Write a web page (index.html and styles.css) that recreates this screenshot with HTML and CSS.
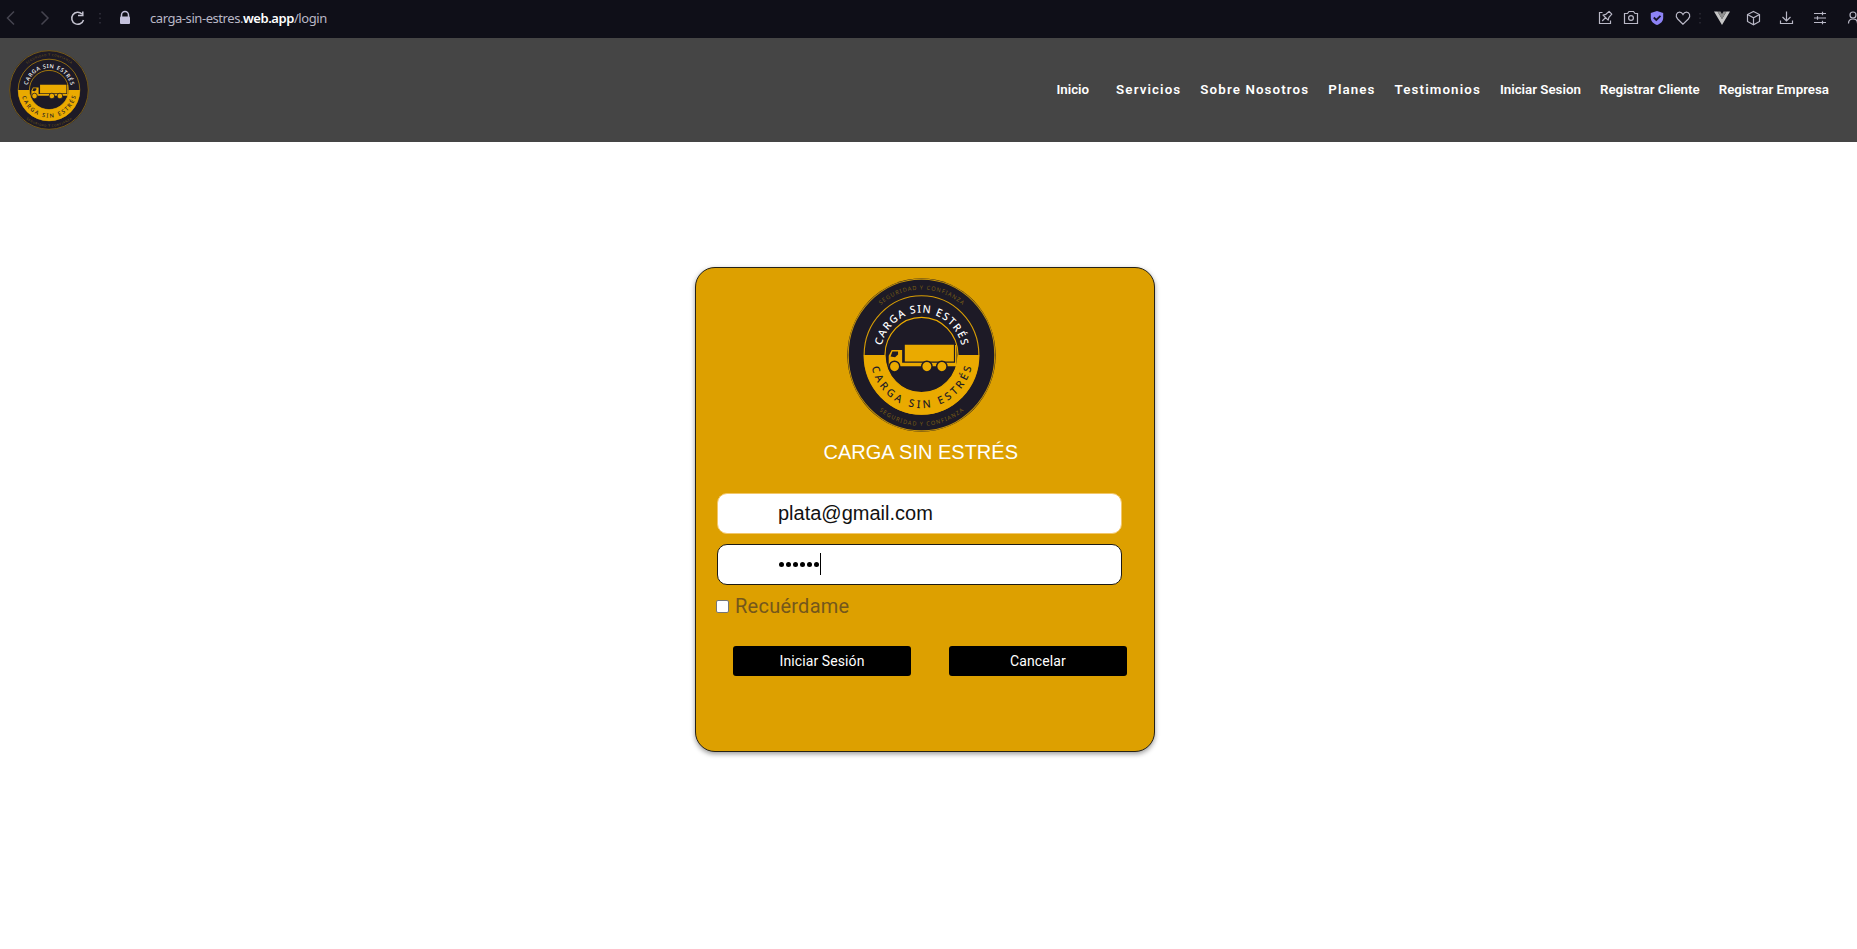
FILE: index.html
```html
<!DOCTYPE html>
<html lang="es">
<head>
<meta charset="utf-8">
<title>Carga Sin Estrés</title>
<link rel="stylesheet" href="styles.css">
</head>
<body>
<svg class="defs" aria-hidden="true">
  <defs>
    <path id="arc-top" d="M45 100A55 55 0 0 1 155 100"/>
    <path id="arc-bottom" d="M31 100A69 69 0 0 0 169 100"/>
    <path id="arc-outer-top" d="M15 100A85 85 0 0 1 185 100"/>
    <path id="arc-outer-bottom" d="M8 100A92 92 0 0 0 192 100"/>
    <symbol id="logo" viewBox="0 0 200 200" preserveAspectRatio="none">
      <circle cx="100" cy="100" r="99.500" fill="#1d1a26"/>
      <circle cx="100" cy="100" r="98.300" fill="none" stroke="#c5930a" stroke-width="1.300"/>
      <circle cx="100" cy="100" r="77" fill="none" stroke="#d79d05" stroke-width="1.500"/>
      <path d="M22.500 100a77.500 77.500 0 0 0 155 0z" fill="#eaaa00"/>
      <circle cx="100" cy="100" r="49" fill="#1d1a26" stroke="#eaaa00" stroke-width="1.600"/>
      <g fill="#eaaa00">
        <path d="M77.600 86.800H143.500V108.300H77.600z"/>
        <path d="M56 101l4-7.500H74V110H145V87H147V114.500H56z"/>
      </g>
      <path d="M58.500 102l2.500-6.500h7.500v4l-4 3.500z" fill="#1d1a26"/>
      <g fill="#eaaa00" stroke="#1d1a26" stroke-width="2">
        <circle cx="63.800" cy="115" r="7"/>
        <circle cx="107.200" cy="115" r="7"/>
        <circle cx="127.300" cy="115" r="7"/>
      </g>
      <g class="logo-name">
        <text fill="#fff"><textPath href="#arc-top" startOffset="50%" textLength="148">CARGA SIN ESTRÉS</textPath></text>
        <text fill="#1d1a26"><textPath href="#arc-bottom" startOffset="50%" textLength="184">CARGA SIN ESTRÉS</textPath></text>
      </g>
      <g class="logo-motto">
        <text><textPath href="#arc-outer-top" startOffset="50%" textLength="119">SEGURIDAD Y CONFIANZA</textPath></text>
        <text><textPath href="#arc-outer-bottom" startOffset="50%" textLength="122">SEGURIDAD Y CONFIANZA</textPath></text>
      </g>
    </symbol>
  </defs>
</svg>

<div class="browser">
  <svg class="browser-nav" viewBox="0 0 140 38" fill="none" stroke-width="1.500">
    <path d="M14 11.500L7.500 18l6.500 6.500M41.500 11.500L48 18l-6.500 6.500" stroke="#45444f"/>
    <path d="M82 14A6 6 0 1 0 83.500 20M82.800 11.500V15.500H78" stroke="#c3c2cf"/>
    <path d="M100 13v11" stroke="#34333e" stroke-dasharray="1.500 3"/>
    <path d="M121.500 17v-2a3.500 3.500 0 0 1 7 0v2" stroke="#c4c1dc"/>
    <rect x="120" y="16.500" width="10" height="7.500" rx="1" fill="#c4c1dc"/>
  </svg>
  <span class="url">carga-sin-estres.<b>web.app</b>/login</span>
  <svg class="browser-tools" viewBox="1590 0 267 38" fill="none" stroke="#b9b8c6" stroke-width="1.200">
    <path d="M1602.500 12.500h-3v11h11v-3"/>
    <path d="M1602.200 21l3.600-3.600M1603 15l5.200 5.200 .7-2.900 2.900-3.200-2.700-2.700-3.200 2.900z" stroke-linejoin="round"/>
    <path d="M1624.500 13.500h3l1.500-2h4.500l1.500 2h2.500v10h-13z"/><circle cx="1631" cy="18" r="2.400"/>
    <path d="M1657 11l6.200 2v4.500c0 4-2.500 6-6.200 7.500-3.700-1.500-6.200-3.500-6.200-7.500V13z" fill="#8d83f5" stroke="none"/>
    <path d="M1653.800 17.500l2.500 2.500 4.200-4.200" stroke="#17152a" stroke-width="1.800"/>
    <path d="M1683 24.200l-5.300-5.200c-3-3.300-.9-6.800 1.800-6.800 1.500 0 2.700.8 3.500 2.300.8-1.500 2-2.300 3.500-2.300 2.700 0 4.800 3.500 1.800 6.800z"/>
    <path d="M1700 13v11" stroke="#34333e" stroke-dasharray="1.500 3"/>
    <path d="M1714 11.500h3.500l4.500 7.500 4.500-7.500h3.500l-8 13.500z" fill="#c6c6c6" stroke="none"/>
    <path d="M1717.500 11.500h3l1.500 2.500 1.500-2.500h3l-4.500 7.500z" fill="#8f8f8f" stroke="none"/>
    <path d="M1753.500 11.500l6 3v7l-6 3.200-6-3.200v-7zM1747.500 14.500l6 3.200 6-3.200M1753.500 17.700v7"/>
    <path d="M1786.500 11.500v9M1782.500 17l4 4 4-4M1780.500 20.500v3h12v-3"/>
    <path d="M1814 13.500h12M1814 18h12M1814 22.500h12M1822.500 11.700v3.600M1817.500 16.200v3.600M1822.500 20.700v3.600"/>
    <circle cx="1853" cy="15" r="3"/><path d="M1848.500 23.500c0-3 1.500-4.500 4.500-4.500s4.500 1.500 4.500 4.500"/>
  </svg>
</div>

<header class="site-header">
  <svg class="header-logo"><use href="#logo"/></svg>
  <nav class="menu">
    <a class="first">Inicio</a>
    <a class="spaced">Servicios</a>
    <a class="spaced">Sobre Nosotros</a>
    <a class="spaced">Planes</a>
    <a class="spaced">Testimonios</a>
    <a>Iniciar Sesion</a>
    <a>Registrar Cliente</a>
    <a>Registrar Empresa</a>
  </nav>
</header>

<main>
  <form class="card">
    <svg class="card-logo"><use href="#logo"/></svg>
    <h1>CARGA SIN ESTRÉS</h1>
    <div class="field">plata@gmail.com</div>
    <div class="field focused"><span class="dots"><i></i><i></i><i></i><i></i><i></i><i></i></span><span class="caret"></span></div>
    <label class="remember"><span class="box"></span>Recuérdame</label>
    <div class="actions">
      <button type="button">Iniciar Sesión</button>
      <button type="button">Cancelar</button>
    </div>
  </form>
</main>
</body>
</html>
```

FILE: styles.css
```css
* { box-sizing: border-box; }
body {
  margin: 0;
  height: 949px;
  overflow: hidden;
  background: #fff;
  font-family: Roboto, sans-serif;
}
svg { display: block; flex: none; }
.defs { position: absolute; width: 0; height: 0; }
.logo-name text {
  font: 500 14px "Noto Sans", sans-serif;
  text-anchor: middle;
}
.logo-motto text {
  font: 400 7.5px "Noto Sans", sans-serif;
  text-anchor: middle;
  fill: #7a5f14;
}

.browser {
  display: flex;
  align-items: center;
  height: 38px;
  background: #0f0f18;
}
.browser-nav { width: 140px; height: 38px; }
.url {
  margin-left: 10px;
  font: 13px/18px "Noto Sans", sans-serif;
  letter-spacing: -0.44px;
  color: #b9b8c6;
  padding-bottom: 2px;
}
.url b { color: #fff; font-weight: 600; }
.browser-tools { width: 267px; height: 38px; margin-left: auto; }

.site-header {
  display: flex;
  align-items: center;
  justify-content: space-between;
  height: 104px;
  padding: 0 28px 0 9px;
  background: #454545;
}
.header-logo { width: 80px; height: 80px; }
.menu {
  display: flex;
  gap: 19px;
  font-size: 13.33px;
  font-weight: 600;
  line-height: 20px;
  color: #fff;
}
.menu .first { margin-right: 8px; }
.menu .spaced { letter-spacing: 1.12px; }

.card {
  display: flex;
  flex-direction: column;
  width: 460px;
  height: 485px;
  margin: 125px 0 0 695px;
  padding: 10px 20px 0 21px;
  border: 1px solid #262216;
  border-radius: 20px;
  background: #dda000;
  box-shadow: 0 2px 5px rgba(0, 0, 0, .4);
}
.card-logo { width: 149px; height: 154px; margin-left: 130px; }
h1 {
  margin: 8px 0 29px 106.5px;
  font: 400 20px/24px "Liberation Sans", sans-serif;
  color: #fff;
  white-space: nowrap;
}
.field {
  display: flex;
  align-items: center;
  width: 405px;
  height: 41px;
  flex: none;
  margin-bottom: 10px;
  padding: 0 0 1px 60px;
  border: 1px solid #f3c76a;
  border-radius: 10px;
  background: #fff;
  font: 20px/24px "Liberation Sans", sans-serif;
  color: #111;
}
.field.focused { border-color: #1c1a14; }
.dots { display: flex; gap: 2px; padding-left: 1px; }
.dots i { width: 5px; height: 5px; border-radius: 50%; background: #000; }
.caret { width: 1px; height: 22px; margin-left: 1px; background: #000; }
.remember {
  display: flex;
  align-items: center;
  gap: 6px;
  height: 24px;
  margin: -1px 0 0 -1px;
  font-size: 20px;
  letter-spacing: .25px;
  color: #74571c;
}
.box {
  width: 13px;
  height: 13px;
  border: 1px solid #767676;
  border-radius: 2px;
  background: #fff;
}
.actions { display: flex; gap: 38px; margin: 28px 0 0 16px; }
.actions button {
  width: 178px;
  height: 30px;
  padding: 0;
  border: 0;
  border-radius: 3px;
  background: #000;
  color: #fff;
  font: 400 14px/29px Roboto, sans-serif;
  letter-spacing: .1px;
}
```
